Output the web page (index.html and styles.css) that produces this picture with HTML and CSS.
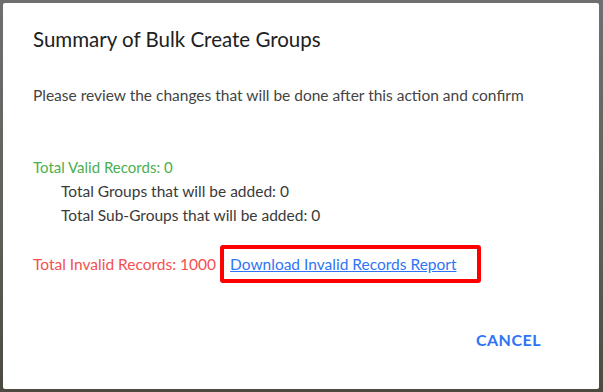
FILE: index.html
```html
<!DOCTYPE html>
<html lang="en">
<head>
    <meta charset="UTF-8">
    <title>Summary of Bulk Create Groups</title>
    <link rel="stylesheet" href="styles.css">
</head>
<body>
    <div class="backdrop">
        <div class="dialog">
            <h2 class="dialog-title">Summary of Bulk Create Groups</h2>
            <p class="intro">Please review the changes that will be done after this action and confirm</p>

            <div class="summary">
                <div class="valid">Total Valid Records: 0</div>
                <div class="sub">Total Groups that will be added: 0</div>
                <div class="sub">Total Sub-Groups that will be added: 0</div>
            </div>

            <div class="invalid-row">
                <span class="invalid">Total Invalid Records: 1000</span>
                <span class="highlight"><a href="#" class="report-link">Download Invalid Records Report</a></span>
            </div>

            <div class="actions">
                <button type="button" class="btn-cancel">CANCEL</button>
            </div>
        </div>
    </div>
</body>
</html>
```

FILE: styles.css
```css
/* Global */
body {
    margin: 0;
    padding: 0;
    font-family: 'Lato', 'Noto Sans', sans-serif;
    color: #333;
}

.backdrop {
    width: 603px;
    height: 392px;
    box-sizing: border-box;
    padding: 3px 4px 3px 3px;
    background: linear-gradient(#6f6f6f, #5f5e58 60%, #4c4a40);
}

.dialog {
    height: 100%;
    background-color: #fff;
    border-radius: 2px;
    padding: 0 30px;
    box-sizing: border-box;
    display: flex;
    flex-direction: column;
}

.dialog-title {
    margin: 22px 0 0;
    font-size: 20.5px;
    font-weight: normal;
    line-height: 28px;
    color: #212121;
}

.intro {
    margin: 31px 0 0;
    font-size: 15.5px;
    line-height: 22px;
    color: #444;
}

.summary {
    margin-top: 49px;
    font-size: 15px;
    line-height: 24px;
}

.valid {
    color: #4caf50;
}

.sub {
    padding-left: 28px;
    font-size: 15.5px;
    color: #3a3a3a;
}

.invalid-row {
    margin-top: 18px;
    display: flex;
    align-items: center;
    font-size: 15.5px;
}

.invalid {
    color: #f44f4f;
}

.highlight {
    margin-left: 4px;
    padding: 6px 20px 6px 6px;
    border: 4px solid #f00;
    border-radius: 3px;
    line-height: 18px;
}

.report-link {
    color: #2f74f6;
}

.actions {
    margin-top: auto;
    margin-bottom: 40px;
    display: flex;
    justify-content: flex-end;
}

.btn-cancel {
    font-family: inherit;
    font-size: 16px;
    font-weight: bold;
    letter-spacing: 0.5px;
    color: #2f74f6;
    background: none;
    border: none;
    padding: 0;
    margin-right: 28px;
    cursor: pointer;
}
```
